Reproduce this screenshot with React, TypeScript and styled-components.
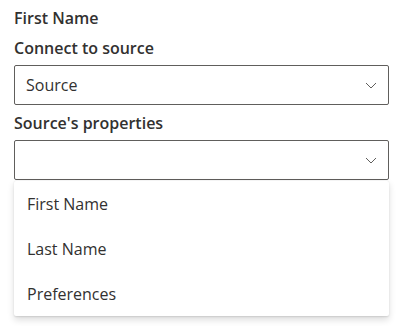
import React from "react";
import styled, { createGlobalStyle } from "styled-components";

const Global = createGlobalStyle`
  html, body { margin: 0; padding: 0; background: #ffffff; }
  body { font-family: "Segoe UI", "Open Sans", "Noto Sans", sans-serif; color: #323130; }
`;

const Page = styled.div`
  width: 404px;
  height: 326px;
  box-sizing: border-box;
  padding: 7px 15px 0 14px;
  display: flex;
  flex-direction: column;
`;

const Title = styled.div`
  font-size: 16px;
  font-weight: 600;
  line-height: 22px;
  height: 22px;
  margin-bottom: 8px;
`;

const Label = styled.div`
  font-size: 16px;
  font-weight: 600;
  line-height: 22px;
  height: 22px;
  margin-bottom: 6px;
`;

const Field = styled.div<{ $gap?: number }>`
  display: flex;
  flex-direction: column;
  margin-bottom: ${(p) => p.$gap ?? 0}px;
`;

const Box = styled.div`
  box-sizing: border-box;
  height: 40px;
  border: 1px solid #605e5c;
  border-radius: 2px;
  display: flex;
  align-items: center;
  padding: 0 11px 0 11px;
  font-size: 16px;
  color: #323130;
`;

const Value = styled.span`
  flex: 1;
`;

const Menu = styled.div`
  margin-top: 1px;
  border-radius: 2px;
  background: #fff;
  box-shadow: 0 3.2px 7.2px rgba(0, 0, 0, 0.132), 0 0.6px 1.8px rgba(0, 0, 0, 0.108);
  display: flex;
  flex-direction: column;
`;

const Item = styled.div`
  height: 45px;
  display: flex;
  align-items: center;
  padding: 0 13px;
  font-size: 16px;
  color: #323130;
`;

const Chevron = () => (
  <svg width="12" height="12" viewBox="0 0 12 12" fill="none">
    <path d="M1 4 L6 9 L11 4" stroke="#605e5c" strokeWidth="1" />
  </svg>
);

export default function App() {
  return (
    <>
      <Global />
      <Page>
        <Title>First Name</Title>
        <Field $gap={7}>
          <Label>Connect to source</Label>
          <Box>
            <Value>Source</Value>
            <Chevron />
          </Box>
        </Field>
        <Field>
          <Label>Source's properties</Label>
          <Box>
            <Value></Value>
            <Chevron />
          </Box>
          <Menu>
            <Item>First Name</Item>
            <Item>Last Name</Item>
            <Item>Preferences</Item>
          </Menu>
        </Field>
      </Page>
    </>
  );
}
